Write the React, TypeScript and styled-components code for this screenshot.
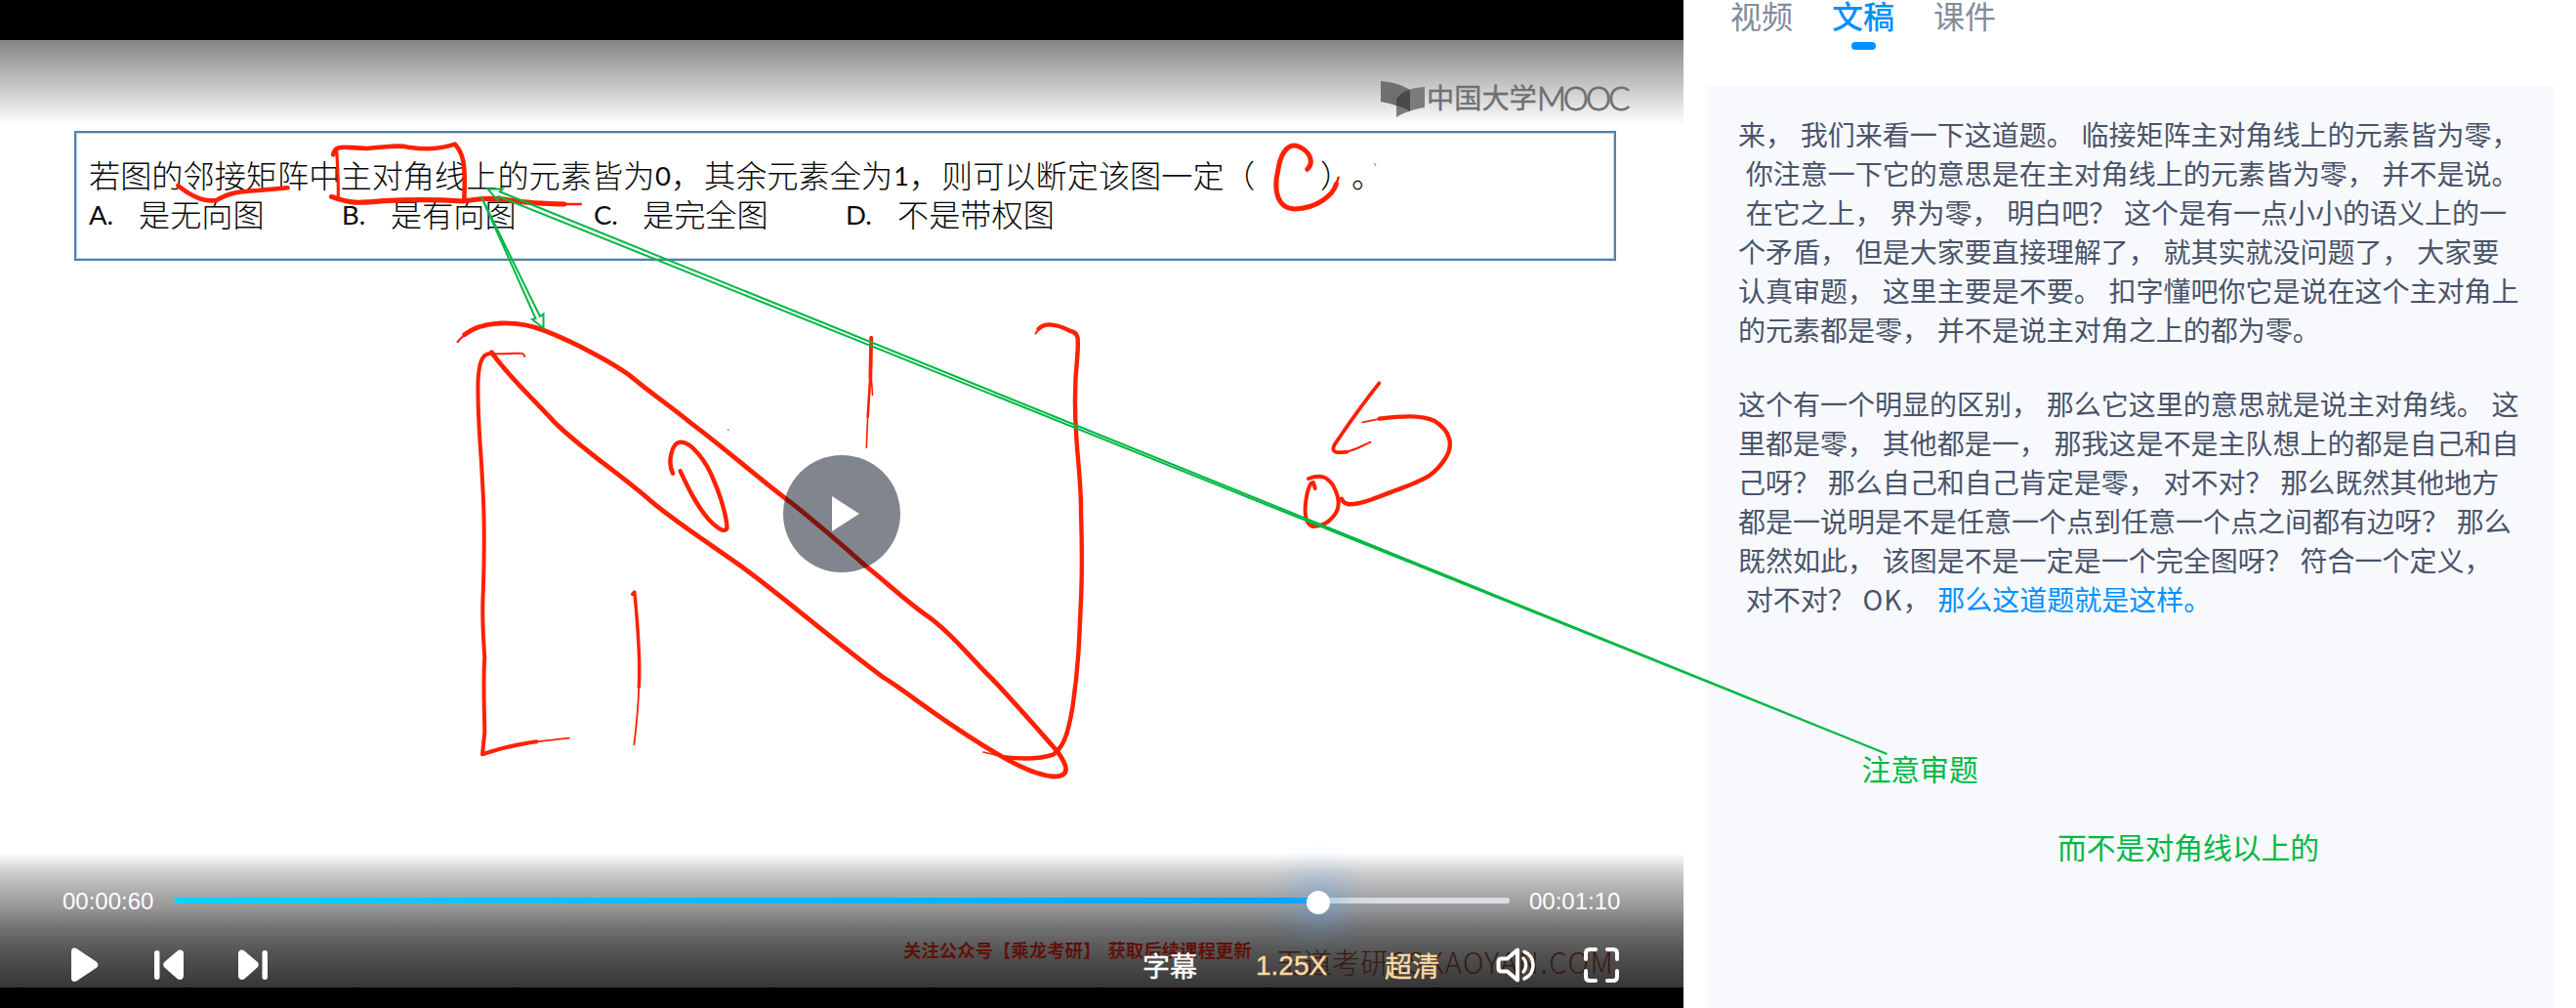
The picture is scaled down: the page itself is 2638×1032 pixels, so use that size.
import React from "react";
import styled, { createGlobalStyle } from "styled-components";

const cjk = `"Noto Sans CJK SC", sans-serif`;
const RED = "#ff2000";
const GREEN = "#00b843";

const GlobalStyle = createGlobalStyle`
  * { box-sizing: border-box; }
  body { margin: 0; background: #fff; font-family: ${cjk}; overflow: hidden; }
`;

const Page = styled.div`
  position: relative;
  display: flex;
  width: 2638px;
  height: 1032px;
  overflow: hidden;
`;

/* ---------- player ---------- */

const Player = styled.section`
  width: 1724px;
  height: 100%;
  padding: 41px 0 21px;
  background: #000;
`;

const Frame = styled.div`
  position: relative;
  display: flex;
  flex-direction: column;
  height: 970px;
  background: #fff;
`;

const TopShade = styled.div`
  display: flex;
  justify-content: flex-end;
  height: 87px;
  padding: 40px 54px 0 0;
  background: linear-gradient(#848484, #fff);
`;

const Brand = styled.div`
  display: flex;
  align-items: center;
  width: 257px;
  height: 40px;
  gap: 1px;
  color: #707070;
  white-space: nowrap;
`;

const BrandText = styled.div`
  display: flex;
  height: 40px;
  margin-top: -4px;
`;

const BrandName = styled.span`
  width: 113px;
  font: 400 28.2px/40px ${cjk};
  -webkit-text-stroke: 0.4px #707070;
`;

const BrandLatin = styled.span`
  font: 300 33px/42px Lato, sans-serif;
  letter-spacing: -3.1px;
  -webkit-text-stroke: 1px #707070;
`;

const Question = styled.div`
  width: 1578.500px;
  height: 133px;
  margin: 6px 0 0 76px;
  padding: 22px 0 0 13px;
  border: 2px solid #5580a8;
  outline: 1px solid #c3d3e4;
  outline-offset: -3px;
`;

const QuestionLine = styled.div`
  display: flex;
  height: 40px;
  color: #0a0a0a;
  font: 300 32.2px/40px ${cjk};
  white-space: nowrap;
`;

const Chunk = styled.span<{ $w: number; $latin?: boolean }>`
  width: ${(p) => p.$w}px;
  flex: none;
  ${(p) => p.$latin && `font-family: Lato, sans-serif; font-size: 27.5px; font-weight: 400; line-height: 44px;`}
`;

const BigPlay = styled.button`
  position: absolute;
  left: 802px;
  top: 425px;
  width: 120px;
  height: 120px;
  padding: 0;
  border: 0;
  border-radius: 50%;
  background: rgba(4, 12, 30, 0.5);
  svg { display: block; }
`;

const Controls = styled.div`
  position: relative;
  height: 138px;
  margin-top: auto;
  background: linear-gradient(
    rgba(0, 0, 0, 0) 0%,
    rgba(0, 0, 0, 0.2) 15%,
    rgba(0, 0, 0, 0.35) 32%,
    rgba(0, 0, 0, 0.42) 42%,
    rgba(0, 0, 0, 0.56) 56%,
    rgba(0, 0, 0, 0.68) 75%,
    rgba(0, 0, 0, 0.79) 100%
  );
`;

const Seek = styled.div`
  position: relative;
  display: flex;
  align-items: center;
  height: 28px;
  padding-left: 64px;
  margin-top: 36px;
`;

const Time = styled.span`
  width: 114px;
  color: #fff;
  font: 24px/28px "Liberation Sans", Arial, sans-serif;
`;

const Track = styled.div`
  position: relative;
  width: 1368px;
  height: 6px;
  margin: -3px 20px 0 0;
  border-radius: 3px;
  background: #dadee3;
`;

const Played = styled.div`
  width: 1172px;
  height: 6px;
  border-radius: 3px;
  background: linear-gradient(90deg, #10d2ff, #08a4ff);
`;

const Knob = styled.i`
  position: absolute;
  left: 1160px;
  top: -7px;
  width: 24px;
  height: 24px;
  border-radius: 50%;
  background: #fff;
  box-shadow: 0 0 40px 6px rgba(80, 165, 250, 0.85);
`;

const Buttons = styled.div`
  position: relative;
  display: flex;
  align-items: center;
  height: 40px;
  margin-top: 31px;
  padding: 0 65px 0 73px;
`;

const Transport = styled.div`
  display: flex;
  align-items: center;
  width: 1097px;
  gap: 55.5px;
  svg { display: block; }
`;

const Option = styled.span<{ $w: number; $gold?: boolean; $latin?: boolean }>`
  flex: none;
  width: ${(p) => p.$w}px;
  color: ${(p) => (p.$gold ? "#ffd9a0" : "#fff")};
  font: ${(p) => (p.$latin ? `400 28px/37px "Liberation Sans", Arial, sans-serif` : `400 28px/37px ${cjk}`)};
  -webkit-text-stroke: 0.4px currentColor;
`;

const Promo = styled.span`
  position: absolute;
  left: 925px;
  top: 85px;
  color: #60110a;
  font: 700 18.4px/28px ${cjk};
  white-space: pre;
  word-spacing: 3px;
`;

const SiteMark = styled.span`
  position: absolute;
  left: 1306px;
  top: 91px;
  color: #38190d;
  font: 300 29px/40px ${cjk};
  white-space: nowrap;
`;

const SiteLatin = styled.span`
  font-size: 29.5px;
  letter-spacing: 1.5px;
`;

/* ---------- transcript ---------- */

const Side = styled.aside`
  display: flex;
  flex-direction: column;
  width: 914px;
  padding: 0 22px 0 24px;
  background: #fff;
`;

const Tabs = styled.nav`
  display: flex;
  gap: 40px;
  height: 88px;
  padding: 0 0 0 24px;
`;

const Tab = styled.span<{ $on?: boolean }>`
  display: flex;
  flex-direction: column;
  align-items: center;
  color: ${(p) => (p.$on ? "#0091ff" : "#838b9c")};
  font: ${(p) => (p.$on ? 500 : 400)} 32px/32px ${cjk};
  height: 52px;
  margin-top: -1px;
  &::after {
    content: "";
    width: 25px;
    height: 8px;
    margin-top: 12px;
    border-radius: 4px;
    background: ${(p) => (p.$on ? "#0091ff" : "transparent")};
  }
`;

const Transcript = styled.div`
  flex: 1;
  padding: 29px 32px;
  background: #f8f9fd;
`;

const Para = styled.p`
  margin: 0 0 36px;
  color: #49546a;
  font: 400 28px/40px ${cjk};
  word-spacing: 1.5px;
`;

const Line = styled.span`
  display: block;
  white-space: pre;
`;

const Spaced = styled.span`
  letter-spacing: 1px;
`;

const Current = styled.span`
  color: #0091ff;
`;

/* ---------- annotations ---------- */

const Ink = styled.svg`
  position: absolute;
  left: 0;
  top: -41px;
  fill: none;
  stroke: ${RED};
  stroke-linecap: round;
  stroke-linejoin: round;
  path { vector-effect: non-scaling-stroke; }
`;

const Arrows = styled.svg`
  position: absolute;
  left: 0;
  top: 0;
  fill: none;
  stroke: ${GREEN};
  stroke-width: 2;
  pointer-events: none;
`;

const Note = styled.span<{ $x: number; $y: number }>`
  position: absolute;
  left: ${(p) => p.$x}px;
  top: ${(p) => p.$y}px;
  color: ${GREEN};
  font: 400 29.8px/40px ${cjk};
  white-space: nowrap;
`;

const linesA = [
  "来， 我们来看一下这道题。 临接矩阵主对角线上的元素皆为零，",
  " 你注意一下它的意思是在主对角线上的元素皆为零， 并不是说。",
  " 在它之上， 界为零， 明白吧？ 这个是有一点小小的语义上的一",
  "个矛盾， 但是大家要直接理解了， 就其实就没问题了， 大家要",
  "认真审题， 这里主要是不要。 扣字懂吧你它是说在这个主对角上",
  "的元素都是零， 并不是说主对角之上的都为零。",
];

const linesB = [
  "这个有一个明显的区别， 那么它这里的意思就是说主对角线。 这",
  "里都是零， 其他都是一， 那我这是不是主队想上的都是自己和自",
  "己呀？ 那么自己和自己肯定是零， 对不对？ 那么既然其他地方",
  "都是一说明是不是任意一个点到任意一个点之间都有边呀？ 那么",
  "既然如此， 该图是不是一定是一个完全图呀？ 符合一个定义，",
];

const Handwriting = () => (
  <Ink width="1724" height="1032" viewBox="0 0 1724 1032">
    <g transform="scale(.5612 .33333)" strokeWidth="5.2">
      <path d="M325 570C350 605 375 620 395 615C420 590 440 588 470 585L525 577" strokeWidth="4.6" />
      <path d="M608 475C612 440 630 455 670 456C710 450 730 445 745 452C780 460 800 458 830 443C845 470 850 500 847 610" strokeWidth="4.6" />
      <path d="M614 455C616 510 618 560 617 605" strokeWidth="3.2" />
      <path d="M605 604C640 625 650 625 700 617C760 612 790 612 845 618C880 610 890 608 920 612C960 625 990 625 1030 627" />
      <path d="M1020 627L1060 627" strokeWidth="2.4" />
    </g>
    <g transform="translate(860 0) scale(.5612 .33333)">
      <path d="M853 520C865 500 860 470 840 452C820 435 805 465 800 520C790 590 800 640 830 642C870 640 900 600 906 565" strokeWidth="5" />
      <path d="M905 570L910 545" strokeWidth="2.4" />
      <path d="M976 502L978 509" stroke="#777" strokeWidth="1" />
    </g>
    <g transform="translate(440 310) scale(.44643 .33333)" strokeWidth="4.8">
      <path d="M64 120C70 110 75 104 82 97" strokeWidth="2.2" />
      <path d="M80 98C120 55 200 52 262 85C330 120 430 190 470 235C510 280 550 315 600 370C680 450 760 545 830 615C900 690 930 725 1000 808C1050 860 1090 915 1150 970C1200 1020 1230 1075 1290 1155C1340 1225 1395 1310 1440 1378C1465 1425 1470 1455 1430 1455C1380 1450 1320 1400 1270 1360C1150 1260 1100 1200 1040 1150C900 1010 800 890 710 805C620 720 540 650 500 600C420 510 350 450 285 365C230 285 180 225 142 152" />
      <path d="M218 165C215 150 210 156 170 157L135 157" strokeWidth="2" />
      <path d="M138 156C118 158 113 190 111 240C109 360 118 450 121 550C126 650 126 750 123 880C119 960 122 1000 126 1090C122 1180 126 1260 126 1320L121 1387C160 1368 200 1357 245 1348" strokeWidth="4" />
      <path d="M240 1349L320 1337" strokeWidth="1.8" />
      <path d="M1390 94L1398 80" strokeWidth="2" />
      <path d="M1397 80C1410 62 1435 63 1470 87C1490 92 1488 110 1486 160C1478 260 1480 340 1483 400C1486 480 1495 560 1494 640C1496 720 1497 800 1495 880C1490 1050 1488 1120 1475 1240C1465 1320 1455 1365 1430 1388C1400 1402 1365 1402 1320 1396" strokeWidth="4.4" />
      <path d="M1325 1397L1270 1380" strokeWidth="1.600" />
      <path d="M558 524C545 490 555 430 575 428C600 425 635 490 650 540C670 600 682 665 682 692C678 705 665 700 640 665C610 620 590 560 575 517" strokeWidth="4.4" />
      <path d="M1013 107L1011 230" strokeWidth="3.8" />
      <path d="M1011 225L1005 350" strokeWidth="2.6" />
      <path d="M1005 345L1002 445M1011 190L1016 283" strokeWidth="1.6" />
      <path d="M465 895L470 888C478 1000 484 1100 480 1180" strokeWidth="3.4" />
      <path d="M480 1175C479 1240 475 1290 469 1357" strokeWidth="1.8" />
      <path d="M684 390L686 390" stroke="#b08080" strokeWidth="1.4" />
    </g>
    <g transform="translate(1040 310) scale(.44643 .33333)" strokeWidth="4.4">
      <path d="M834 247C790 320 760 380 732 435C722 460 735 462 760 458" strokeWidth="3.8" />
      <path d="M758 458C780 452 790 442 814 428" strokeWidth="2" />
      <path d="M796 367L840 355" strokeWidth="1.800" />
      <path d="M835 356C890 347 930 345 960 362C1000 395 1005 440 985 480C960 530 940 540 900 562C850 585 790 625 762 618C750 615 750 608 748 602" />
      <path d="M672 540C700 525 715 535 728 560C745 600 745 630 730 655C715 680 700 688 682 687C665 680 663 650 665 620C668 580 675 550 683 552L687 570" strokeWidth="4" />
    </g>
  </Ink>
);

const App = () => (
  <Page>
    <GlobalStyle />
    <Player>
      <Frame>
        <TopShade>
          <Brand>
            <svg width="47" height="40" viewBox="0 0 47 40">
              <path d="M1 2C14 3 23 6 31 11V33C22 28 12 25 1 23Z" fill="#6f6f6f" />
              <path d="M17 39V20C24 11 33 9 46 8V29C34 31 25 34 17 39Z" fill="#7b7b7b" />
              <path d="M17 20C21 15 25 12 31 11V33C26 30 21 28 17 27Z" fill="#4a4a4a" />
            </svg>
            <BrandText>
              <BrandName>中国大学</BrandName>
              <BrandLatin>MOOC</BrandLatin>
            </BrandText>
          </Brand>
        </TopShade>
        <Question>
          <QuestionLine>
            <Chunk $w={580}>若图的邻接矩阵中主对角线上的元素皆为</Chunk>
            <Chunk $w={16} $latin>0</Chunk>
            <Chunk $w={34}>，</Chunk>
            <Chunk $w={194}>其余元素全为</Chunk>
            <Chunk $w={16} $latin>1</Chunk>
            <Chunk $w={33}>，</Chunk>
            <Chunk $w={289}>则可以断定该图一定</Chunk>
            <Chunk $w={99}>（</Chunk>
            <Chunk $w={32}>）</Chunk>
            <Chunk $w={32}>。</Chunk>
          </QuestionLine>
          <QuestionLine>
            <Chunk $w={51} $latin>A.</Chunk>
            <Chunk $w={208}>是无向图</Chunk>
            <Chunk $w={50} $latin>B.</Chunk>
            <Chunk $w={208}>是有向图</Chunk>
            <Chunk $w={50} $latin>C.</Chunk>
            <Chunk $w={208}>是完全图</Chunk>
            <Chunk $w={53} $latin>D.</Chunk>
            <Chunk $w={165}>不是带权图</Chunk>
          </QuestionLine>
        </Question>
        <Handwriting />
        <BigPlay aria-label="播放">
          <svg width="120" height="120" viewBox="0 0 120 120">
            <path d="M50 42L78 60L50 78Z" fill="#fff" />
          </svg>
        </BigPlay>
        <Controls>
          <Promo>关注公众号【乘龙考研】 获取后续课程更新</Promo>
          <SiteMark>
            王道考研<SiteLatin>CSKAOYAN.COM</SiteLatin>
          </SiteMark>
          <Seek>
            <Time>00:00:60</Time>
            <Track>
              <Played />
              <Knob />
            </Track>
            <Time>00:01:10</Time>
          </Seek>
          <Buttons>
            <Transport>
              <svg width="29" height="36" viewBox="0 0 29 36" fill="#fff">
                <path d="M0 4C0 .5 3-.5 6 1.5L25.500 14.500C28 16.500 28 19 25.500 21L6 34C3 36 0 35 0 31.500Z" />
              </svg>
              <svg width="31" height="32" viewBox="0 0 31 32" fill="#fff">
                <rect x="0" y="1" width="5.500" height="30" rx="2.700" />
                <path d="M30 4V27C30 31 26 32 23.500 30L10.500 18.500C8.800 16.800 8.800 14.500 10.500 12.800L23.500 1.800C26-.5 30 .5 30 4Z" />
              </svg>
              <svg width="31" height="32" viewBox="0 0 31 32" fill="#fff">
                <path d="M0 4V27C0 31 4 32 6.500 30L19.500 18.500C21.200 16.800 21.200 14.500 19.500 12.800L6.500 1.800C4-.5 0 .5 0 4Z" />
                <rect x="24.500" y="1" width="5.500" height="30" rx="2.700" />
              </svg>
            </Transport>
            <Option $w={116}>字幕</Option>
            <Option $w={132} $gold $latin>1.25X</Option>
            <Option $w={114} $gold>超清</Option>
            <svg width="42" height="36" viewBox="0 0 42 36" fill="none" stroke="#fff" strokeWidth="4" strokeLinejoin="round" strokeLinecap="round" style={{ flex: "none" }}>
              <path d="M22 2.500V33.500L11.500 24.500H6C3.500 24.500 2.500 23.500 2.500 21.500V14.500C2.500 12.500 3.500 11.500 6 11.500H11.500Z" />
              <path d="M28 11C31.500 14.500 31.500 21.500 28 25" strokeWidth="3.400" />
              <path d="M29 4.500C41 9 41 27 29 32" strokeWidth="3.600" />
            </svg>
            <svg width="36" height="36" viewBox="0 0 36 36" fill="none" stroke="#fff" strokeWidth="4" strokeLinecap="round" style={{ flex: "none", marginLeft: 48 }}>
              <path d="M2 12V6Q2 2 6 2H12M24 2H30Q34 2 34 6V12M34 24V30Q34 34 30 34H24M12 34H6Q2 34 2 30V24" />
            </svg>
          </Buttons>
        </Controls>
      </Frame>
    </Player>

    <Side>
      <Tabs>
        <Tab>视频</Tab>
        <Tab $on>文稿</Tab>
        <Tab>课件</Tab>
      </Tabs>
      <Transcript>
        <Para>
          {linesA.map((t) => (
            <Line key={t}>{t}</Line>
          ))}
        </Para>
        <Para>
          {linesB.map((t) => (
            <Line key={t}>{t}</Line>
          ))}
          <Line>
            {" 对不对？ "}
            <Spaced>OK</Spaced>
            {"， "}
            <Current>那么这道题就是这样。</Current>
          </Line>
        </Para>
      </Transcript>
    </Side>

    <Arrows width="2638" height="1032" viewBox="0 0 2638 1032">
      <path d="M492.700 201L548.500 326L545 327L556.500 336V321.500L553 324Z" />
      <path d="M1932.500 772L511.800 196.300L514.600 193.500L499.400 193.300L509.600 205L510.700 201Z" />
    </Arrows>
    <Note $x={1906.5} $y={766}>注意审题</Note>
    <Note $x={2107} $y={846}>而不是对角线以上的</Note>
  </Page>
);

export default App;
